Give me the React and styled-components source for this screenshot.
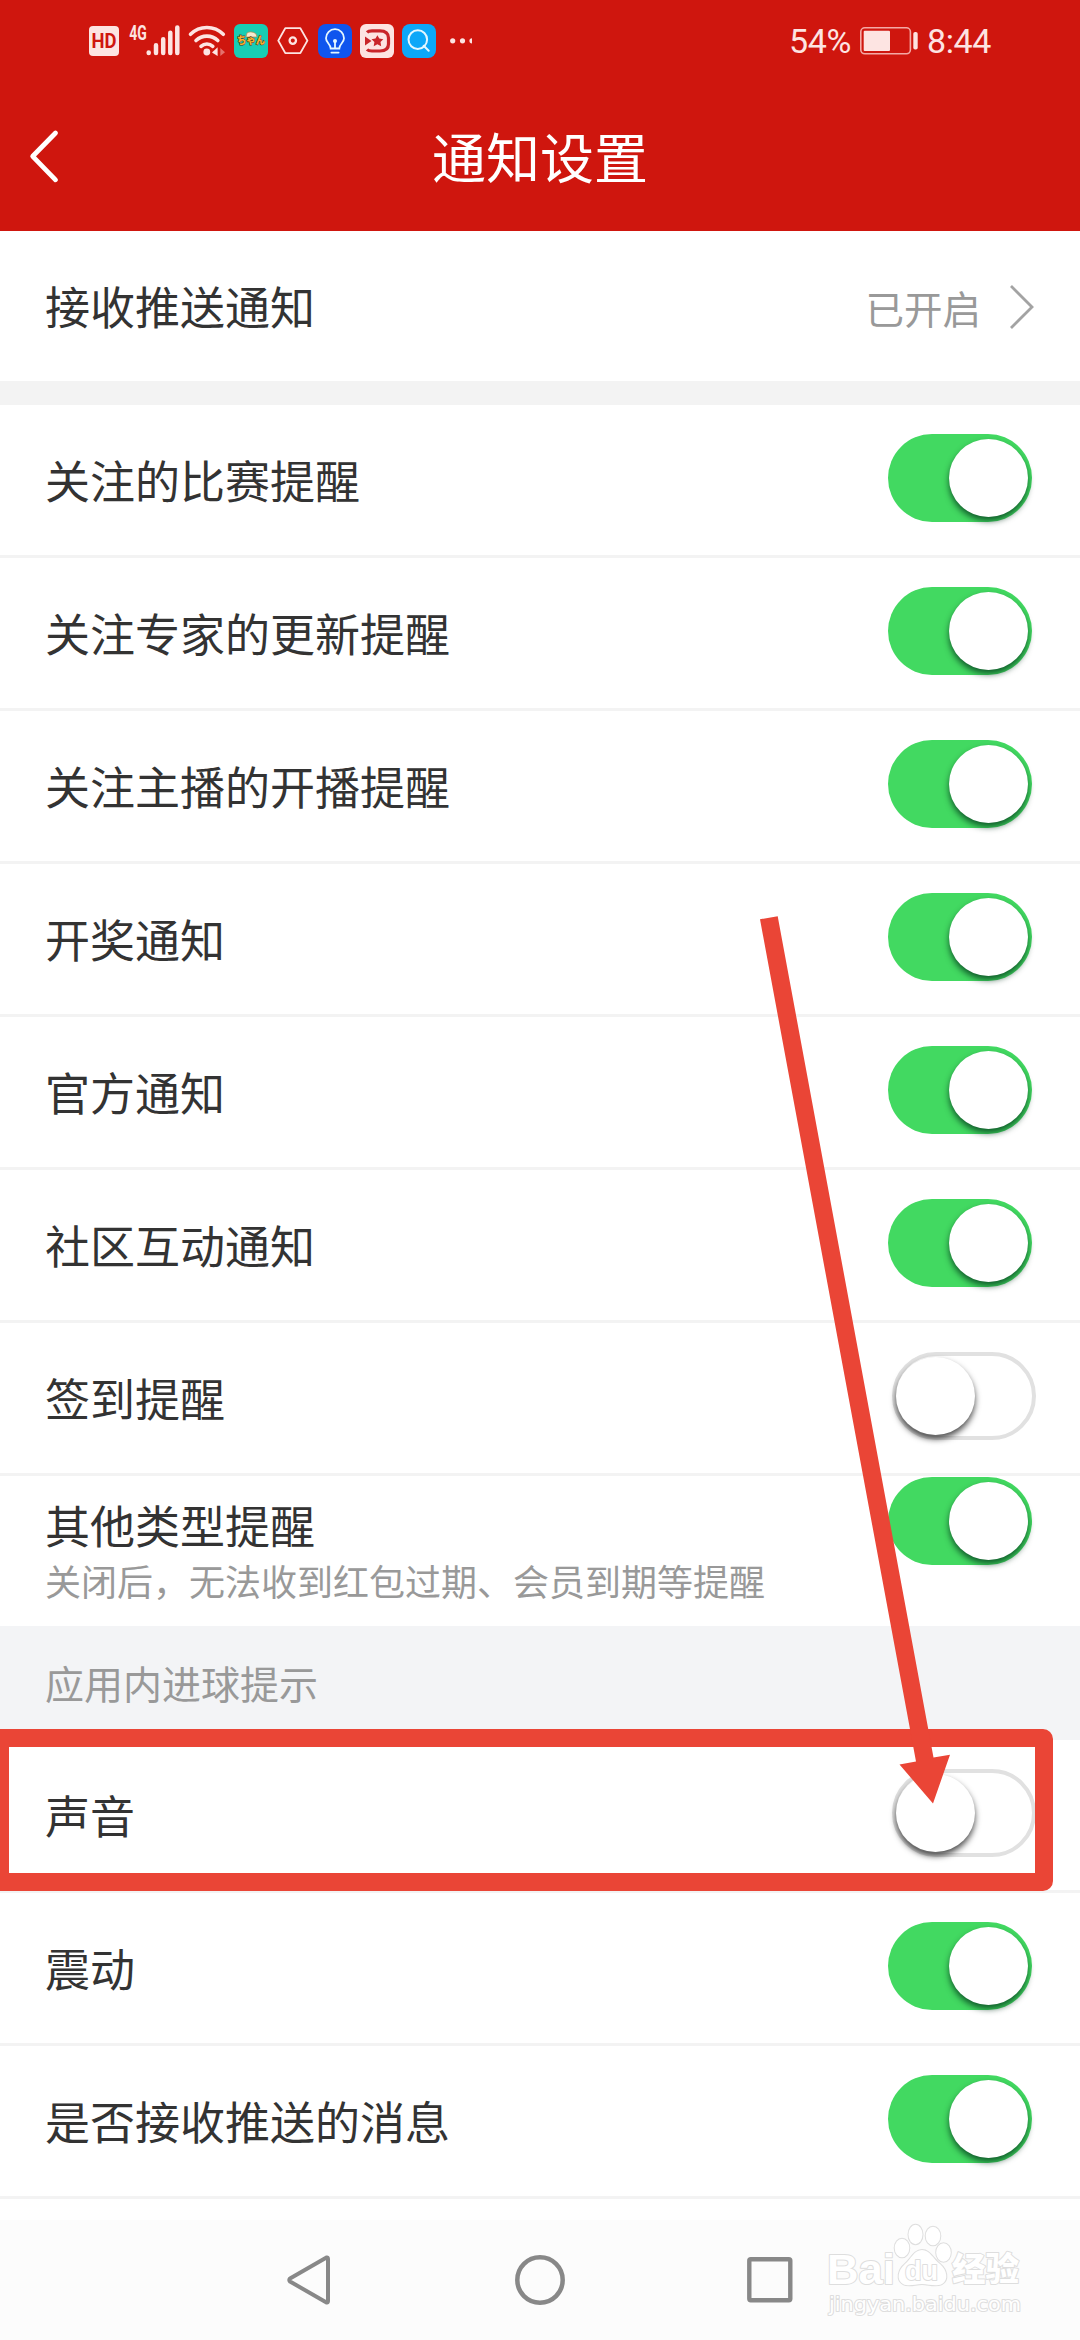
import styled, { createGlobalStyle } from "styled-components";

const GlobalStyle = createGlobalStyle`
  body {
    margin: 0;
    background: #ffffff;
    font-family: "Noto Sans CJK SC", sans-serif;
    color: #333333;
  }

  * {
    box-sizing: border-box;
  }
`;

const Screen = styled.div`
  position: relative;
  width: 1080px;
  height: 2340px;
  overflow: hidden;
  display: flex;
  flex-direction: column;
  background: #ffffff;
`;

const Header = styled.header`
  height: 231px;
  background: #cf160e;
  color: #ffffff;
`;

const StatusBar = styled.div`
  height: 82px;
  padding: 0 89px;
  display: flex;
  align-items: center;
  justify-content: space-between;
  color: #fde4e2;
`;

const StatusGroup = styled.div`
  display: flex;
  align-items: center;
  gap: ${({ $gap }) => $gap}px;
`;

const StatusText = styled.span`
  font-family: Roboto, sans-serif;
  font-size: 34px;
  line-height: 40px;
  letter-spacing: -0.4px;
`;

const Icon = styled.svg`
  display: block;
  flex: none;
  overflow: visible;
`;

const TitleBar = styled.div`
  height: 149px;
  padding: 0 30px;
  display: grid;
  grid-template-columns: 60px 1fr 60px;
  align-items: center;
`;

const Title = styled.h1`
  margin: 0;
  font-size: 54px;
  font-weight: 400;
  line-height: 80px;
  text-align: center;
  padding-bottom: 2px;
`;

const Row = styled.div`
  height: ${({ $last }) => ($last ? 150 : 153)}px;
  flex: none;
  padding: 0 48px 0 45px;
  display: flex;
  align-items: flex-start;
  justify-content: space-between;
  border-bottom: ${({ $last }) => ($last ? "none" : "3px solid #f3f3f3")};
`;

const Label = styled.span`
  font-size: 45px;
  line-height: 66px;
  padding-top: ${({ $tight }) => ($tight ? 16 : 42)}px;
`;

const Texts = styled.div`
  display: flex;
  flex-direction: column;
`;

const Hint = styled.span`
  font-size: 36px;
  line-height: 44px;
  color: #999999;
`;

const Value = styled.div`
  height: 150px;
  display: flex;
  align-items: center;
  gap: 29px;
  padding-top: 1px;
  margin-right: -2px;
  font-size: 38.5px;
  color: #999999;
`;

const Gap = styled.div`
  height: 24px;
  flex: none;
  background: #f3f3f3;
`;

const SectionTitle = styled.div`
  height: 114px;
  flex: none;
  padding: 27px 45px 0;
  font-size: 39px;
  line-height: 58px;
  color: #999999;
  background: #f3f4f6;
`;

const Track = styled.div`
  width: 144px;
  height: 88px;
  margin-top: ${({ $tight }) => ($tight ? 1 : 29)}px;
  margin-right: ${({ $on }) => ($on ? 0 : -4)}px;
  padding: ${({ $on }) => ($on ? "5px 4px" : "1px 0")};
  display: flex;
  justify-content: ${({ $on }) => ($on ? "flex-end" : "flex-start")};
  border: ${({ $on }) => ($on ? "none" : "4px solid #e1e1e1")};
  border-radius: 44px;
  background: ${({ $on }) => ($on ? "#42d961" : "#ffffff")};
`;

const Knob = styled.div`
  width: 79px;
  height: 78px;
  border-radius: 50%;
  background: #ffffff;
  box-shadow: 0 4px 6px
    ${({ $on }) => ($on ? "rgba(0, 50, 25, 0.75)" : "rgba(0, 0, 0, 0.7)")};
`;

const NavBar = styled.nav`
  height: 120px;
  margin-top: auto;
  padding: 0 287px;
  display: flex;
  align-items: center;
  justify-content: space-between;
  background: #fcfcfc;
`;

const Overlay = styled.svg`
  position: absolute;
  top: 0;
  left: 0;
  pointer-events: none;
`;

const matchRows = [
  { label: "关注的比赛提醒", on: true },
  { label: "关注专家的更新提醒", on: true },
  { label: "关注主播的开播提醒", on: true },
  { label: "开奖通知", on: true },
  { label: "官方通知", on: true },
  { label: "社区互动通知", on: true },
  { label: "签到提醒", on: false },
];

const goalRows = [
  { label: "声音", on: false },
  { label: "震动", on: true },
  { label: "是否接收推送的消息", on: true },
];

function Switch({ on, tight }) {
  return (
    <Track $on={on} $tight={tight}>
      <Knob $on={on} />
    </Track>
  );
}

function SettingRow({ label, on }) {
  return (
    <Row>
      <Label>{label}</Label>
      <Switch on={on} />
    </Row>
  );
}

function HdIcon() {
  return (
    <Icon width="30" height="30" viewBox="0 0 30 30">
      <rect width="30" height="30" rx="4" fill="#fde4e2" />
      <text
        x="15"
        y="22"
        textAnchor="middle"
        textLength="25"
        lengthAdjust="spacingAndGlyphs"
        fontFamily="Roboto"
        fontWeight="700"
        fontSize="19.5"
        fill="#cf160e"
      >
        HD
      </text>
    </Icon>
  );
}

function SignalIcon() {
  return (
    <Icon width="51" height="34" viewBox="0 0 51 34">
      <text
        x="0.3"
        y="15.5"
        textLength="17.5"
        lengthAdjust="spacingAndGlyphs"
        fontFamily="Roboto"
        fontWeight="700"
        fontSize="20"
        fill="#fde4e2"
      >
        4G
      </text>
      <g stroke="#fde4e2" strokeWidth="4.5" strokeLinecap="round">
        <path d="M19.7 28.5v.5M27 21.3V29M34.2 15.3V29M41.3 8.8V29M48.3 3.4V29" />
      </g>
    </Icon>
  );
}

function WifiIcon() {
  return (
    <Icon width="38" height="34" viewBox="0 0 38 34">
      <g fill="none" stroke="#fde4e2" strokeWidth="3.6" strokeLinecap="round">
        <path d="M2.5 10.3C11.6 1.2 26.2 1.2 35.3 10.3" />
        <path d="M8 16.5C14 10.6 23.8 10.6 29.8 16.5" />
        <path d="M13 22.3C16.4 19.2 21.4 19.2 24.8 22.3" />
      </g>
      <circle cx="18.8" cy="28" r="3.4" fill="#fde4e2" />
      <path d="M24 28.4 29.6 23.2V32Z" fill="#fde4e2" />
      <path d="M32.3 24 37 28.2 32.3 32Z" fill="#e5716c" />
    </Icon>
  );
}

function GameIcon() {
  return (
    <Icon width="34" height="34" viewBox="0 0 34 34">
      <rect width="34" height="34" rx="6" fill="#18cdb4" />
      <path
        d="M13 9c3-2 7-1 9 1l1 3H12z"
        fill="#f6ead0"
        stroke="#b98a4a"
        strokeWidth=".7"
      />
      <text
        x="3"
        y="19.5"
        textLength="28"
        lengthAdjust="spacingAndGlyphs"
        fontFamily="Noto Sans CJK JP"
        fontWeight="900"
        fontSize="10.5"
        fill="#f9b22c"
        stroke="#4b2c18"
        strokeWidth="1"
        paintOrder="stroke"
      >
        ちゃん
      </text>
    </Icon>
  );
}

function HexIcon() {
  return (
    <Icon width="34" height="34" viewBox="0 0 34 34">
      <g fill="none" stroke="#fde4e2" strokeWidth="1.9" strokeLinejoin="round">
        <path d="M9.3 4.1H24.3L31.4 16.6 24.3 29.1H9.3L2.3 16.6Z" />
        <circle cx="16.8" cy="16.6" r="3.2" strokeWidth="2.3" />
      </g>
    </Icon>
  );
}

function BulbIcon() {
  return (
    <Icon width="34" height="34" viewBox="0 0 34 34">
      <rect width="34" height="34" rx="8" fill="#0f55ee" />
      <g fill="none" stroke="#e4f7ff" strokeWidth="1.8" strokeLinecap="round">
        <path d="M12.7 24.5C12.7 20 8 19 8 14.2a9 9 0 0 1 18 0c0 4.8-4.7 5.8-4.7 10.3z" />
        <path d="M13.4 28.6h7.2M17 18v6" />
      </g>
      <circle cx="17" cy="17" r="2" fill="#e4f7ff" />
    </Icon>
  );
}

function VideoIcon() {
  return (
    <Icon width="34" height="34" viewBox="0 0 34 34">
      <rect width="34" height="34" rx="6" fill="#fde4e2" />
      <path
        d="M7 8.3Q8.4 6.9 12 6.9H20Q28.5 6.9 28.5 14V20Q28.5 27 20 27H12Q8.4 27 7 25.5"
        fill="none"
        stroke="#c9252a"
        strokeWidth="3.2"
      />
      <path d="M5 12.5 11.5 17 5 21.5Z" fill="#c9252a" />
      <path
        d="M17.4 11.2 19.3 14.6 23.3 15.2 20.5 18 21.2 22.2 17.4 20.3 13.7 22.2 14.4 18 11.5 15.2 15.5 14.6Z"
        fill="#c9252a"
      />
    </Icon>
  );
}

function SearchIcon() {
  return (
    <Icon width="34" height="34" viewBox="0 0 34 34">
      <rect width="34" height="34" rx="8" fill="#0da7f8" />
      <g fill="none" stroke="#e4f7ff" strokeWidth="2" strokeLinecap="round">
        <circle cx="15.8" cy="15.6" r="9.3" />
        <path d="m21.7 21.8 5 5" />
      </g>
    </Icon>
  );
}

function MoreIcon() {
  return (
    <Icon width="22" height="34" viewBox="0 0 22 34">
      <g fill="#fde4e2">
        <circle cx="2.7" cy="16.8" r="2.6" />
        <circle cx="12.5" cy="16.8" r="2.6" />
        <path d="M22 14.2a2.6 2.6 0 0 0 0 5.2z" />
      </g>
    </Icon>
  );
}

function BatteryIcon() {
  return (
    <Icon width="58" height="28" viewBox="0 0 58 28">
      <rect
        x="0.8"
        y="0.8"
        width="49.6"
        height="26"
        rx="4"
        fill="none"
        stroke="#f4a9a5"
        strokeWidth="1.6"
      />
      <rect x="3.7" y="3.7" width="26.3" height="20.3" rx="1" fill="#fde4e2" />
      <rect x="53.3" y="5" width="4.4" height="17.5" rx="1.8" fill="#fde4e2" />
    </Icon>
  );
}

function Watermark() {
  return (
    <g
      fill="#ffffff"
      stroke="#dedede"
      strokeWidth="2"
      strokeLinejoin="round"
      paintOrder="stroke"
    >
      <text
        x="827"
        y="2284"
        fontSize="43"
        fontWeight="700"
        fontFamily="Liberation Sans"
        textLength="68"
        lengthAdjust="spacingAndGlyphs"
      >
        Bai
      </text>
      <ellipse cx="902" cy="2248" rx="7.3" ry="9.3" />
      <ellipse cx="915.5" cy="2234.5" rx="7" ry="9.7" />
      <ellipse cx="933" cy="2236" rx="7.3" ry="9.3" />
      <ellipse cx="943.5" cy="2252.5" rx="7.3" ry="9.3" />
      <path d="M922 2250C914 2250 911 2259 905 2264C898 2270 896 2280 903 2284C909 2287 915 2284 922 2284C929 2284 935 2287 942 2284C949 2280 947 2270 940 2264C933 2259 930 2250 922 2250Z" />
      <text
        x="905"
        y="2280"
        fontSize="28"
        fontFamily="Liberation Sans"
        fontWeight="700"
        textLength="33"
        lengthAdjust="spacingAndGlyphs"
      >
        du
      </text>
      <text
        x="952"
        y="2281"
        fontSize="33"
        fontWeight="900"
        fontFamily="Noto Sans CJK SC"
        textLength="67"
        lengthAdjust="spacingAndGlyphs"
      >
        经验
      </text>
      <text
        x="829"
        y="2311"
        fontSize="19"
        fontFamily="DejaVu Sans"
        textLength="192"
        lengthAdjust="spacingAndGlyphs"
      >
        jingyan.baidu.com
      </text>
    </g>
  );
}

export default function App() {
  return (
    <>
      <GlobalStyle />
      <Screen>
        <Header>
          <StatusBar>
            <StatusGroup $gap={8}>
              <StatusGroup $gap={10}>
                <HdIcon />
                <SignalIcon />
              </StatusGroup>
              <WifiIcon />
              <GameIcon />
              <HexIcon />
              <BulbIcon />
              <VideoIcon />
              <SearchIcon />
              <StatusGroup $gap={6}>
                <span />
                <MoreIcon />
              </StatusGroup>
            </StatusGroup>
            <StatusGroup $gap={9}>
              <StatusText>54%</StatusText>
              <BatteryIcon />
              <StatusText>8:44</StatusText>
            </StatusGroup>
          </StatusBar>
          <TitleBar>
            <Icon width="28" height="52" viewBox="0 0 28 52">
              <path
                d="M25.5 2 2.7 25.3l22.8 23.5"
                fill="none"
                stroke="#ffffff"
                strokeWidth="4.8"
                strokeLinecap="round"
                strokeLinejoin="round"
              />
            </Icon>
            <Title>通知设置</Title>
          </TitleBar>
        </Header>

        <Row $last>
          <Label>接收推送通知</Label>
          <Value>
            已开启
            <Icon width="24" height="44" viewBox="0 0 24 44">
              <path
                d="M1 1 22 22 1 43"
                fill="none"
                stroke="#a3a3a3"
                strokeWidth="2.8"
              />
            </Icon>
          </Value>
        </Row>
        <Gap />

        {matchRows.map((row) => (
          <SettingRow key={row.label} {...row} />
        ))}
        <Row $last>
          <Texts>
            <Label $tight>其他类型提醒</Label>
            <Hint>关闭后，无法收到红包过期、会员到期等提醒</Hint>
          </Texts>
          <Switch on tight />
        </Row>

        <SectionTitle>应用内进球提示</SectionTitle>
        {goalRows.map((row) => (
          <SettingRow key={row.label} {...row} />
        ))}

        <NavBar>
          <Icon width="44" height="50" viewBox="0 0 44 50">
            <path
              d="M39.5 2.5Q41 2 41 4V46Q41 48 39.5 47.5L3 26.5Q1.5 25 3 23.5Z"
              fill="none"
              stroke="#888888"
              strokeWidth="4"
              strokeLinejoin="round"
            />
          </Icon>
          <Icon width="50" height="50" viewBox="0 0 50 50">
            <circle
              cx="26"
              cy="25"
              r="22.7"
              fill="none"
              stroke="#888888"
              strokeWidth="4.5"
            />
          </Icon>
          <Icon width="46" height="46" viewBox="0 0 46 46">
            <rect
              x="2.3"
              y="2.3"
              width="41"
              height="41"
              rx="1.5"
              fill="none"
              stroke="#888888"
              strokeWidth="4.4"
            />
          </Icon>
        </NavBar>

        <Overlay width="1080" height="2340" viewBox="0 0 1080 2340">
          <rect
            x="0"
            y="1738"
            width="1044"
            height="144"
            rx="1"
            fill="none"
            stroke="#ea4536"
            strokeWidth="18"
            strokeLinejoin="round"
          />
          <path
            d="M760 919.3 777.7 916.3 933.5 1757.5 950 1754.7 933 1803.5 899.5 1764.5 916 1761.5Z"
            fill="#ea4536"
          />
          <Watermark />
        </Overlay>
      </Screen>
    </>
  );
}
